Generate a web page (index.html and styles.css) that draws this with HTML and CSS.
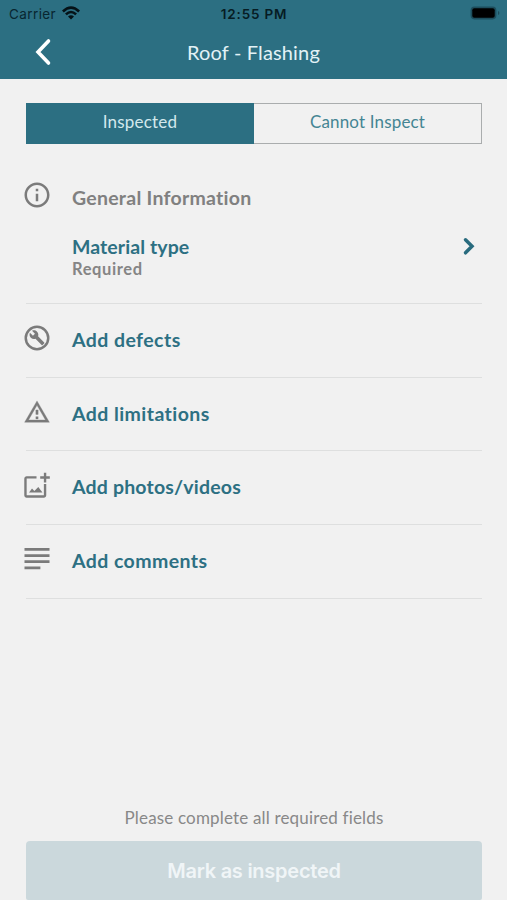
FILE: index.html
```html
<!DOCTYPE html>
<html lang="en">
<head>
<meta charset="utf-8">
<title>Roof - Flashing</title>
<link rel="stylesheet" href="styles.css">
</head>
<body>
<div class="screen">
  <header class="header">
    <div class="status">
      <div class="carrier"><span>Carrier</span>
        <svg class="wifi" viewBox="0 0 18 14"><path d="M0 4.500Q9-4.200 18 4.500L16.200 6.400Q9-.5 1.800 6.400ZM3 7.500Q9 1.800 15 7.500L13.200 9.300Q9 5.400 4.800 9.300ZM6 10.500Q9 8 12 10.500L9 13.500Z"/></svg>
      </div>
      <div class="time">12:55 PM</div>
      <svg class="battery" viewBox="0 0 30 14"><rect x=".6" y=".6" width="25.800" height="12.800" rx="3.800"/><rect class="charge" x="2.300" y="2.300" width="22.400" height="9.400" rx="2"/><path d="M28 5v4q1.400-.4 1.400-2T28 5Z"/></svg>
    </div>
    <div class="nav">
      <svg class="back" viewBox="0 0 18 28"><path d="M14.500 3L4 14l10.500 11"/></svg>
      <h1 class="title">Roof - Flashing</h1>
    </div>
  </header>
  <main class="content">
    <div class="segments">
      <div class="segment active">Inspected</div>
      <div class="segment">Cannot Inspect</div>
    </div>
    <section class="general">
      <svg class="icon" viewBox="0 0 24 24"><path d="M11 7h2v2h-2zm0 4h2v6h-2zm1-9C6.480 2 2 6.480 2 12s4.480 10 10 10 10-4.480 10-10S17.520 2 12 2zm0 18c-4.410 0-8-3.590-8-8s3.590-8 8-8 8 3.590 8 8-3.590 8-8 8z"/></svg>
      <div class="info">
        <h2 class="heading">General Information</h2>
        <div class="field">
          <div><div class="label material">Material type</div><div class="required">Required</div></div>
          <svg class="chevron" viewBox="0 0 12 20"><path d="M2.500 3.800l6.500 6.500-6.500 6.500"/></svg>
        </div>
      </div>
    </section>
    <div class="row">
      <svg class="icon" viewBox="0 0 24 24"><circle class="ring" cx="12" cy="12" r="9"/><g transform="translate(5.500 5.300) scale(.54)"><path d="M22.700 19l-9.100-9.100c.9-2.300.4-5-1.500-6.900-2-2-5-2.400-7.400-1.300L9 6 6 9 1.600 4.700C.4 7.100.9 10.100 2.900 12.100c1.900 1.900 4.600 2.400 6.900 1.500l9.100 9.100c.4.400 1 .4 1.400 0l2.300-2.300c.5-.4.500-1.100.1-1.400z"/></g></svg>
      <span class="label">Add defects</span>
    </div>
    <div class="row">
      <svg class="icon" viewBox="0 0 24 24"><g transform="translate(1.200 1.300) scale(.9)"><path class="outline" d="M12 5.990L19.530 19H4.470L12 5.990M12 2L1 21h22L12 2zm1 14h-2v2h2v-2zm0-6h-2v4h2v-4z"/></g></svg>
      <span class="label">Add limitations</span>
    </div>
    <div class="row">
      <svg class="icon" viewBox="0 0 24 24"><g transform="translate(-1.500 .7) scale(.95)"><path d="M20 20.500H5.500V6.500h8.300V4.600H5.500c-1.100 0-2 .9-2 2v14c0 1.100.9 2 2 2H20c1.100 0 2-.9 2-2v-9.500h-2v9.400zM12 17l-2-2.200L7.500 18.300h11.300l-3.500-4.700zM22 4.600V1.500h-2v3.100h-3.100v2H20v3.100h2V6.600h3v-2z"/></g></svg>
      <span class="label photos">Add photos/videos</span>
    </div>
    <div class="row">
      <svg class="icon" viewBox="0 0 24 24"><path d="M2 3.200h20v2.200H2zM2 8.100h20v2.200H2zM2 13h20v2.200H2zM2 17.900h12.700v2.200H2z"/></svg>
      <span class="label">Add comments</span>
    </div>
  </main>
  <footer class="footer">
    <p class="hint">Please complete all required fields</p>
    <button class="submit" disabled>Mark as inspected</button>
  </footer>
</div>
</body>
</html>
```

FILE: styles.css
```css
* { box-sizing: border-box; }
body { margin: 0; background: #f1f1f1; font-family: Lato, "Noto Sans", sans-serif; font-variant-ligatures: none; color: #7d7d7d; }
svg { display: block; flex: none; }
h1, h2, p { margin: 0; }
.screen { width: 507px; height: 900px; display: flex; flex-direction: column; overflow: hidden; }
.header { height: 79px; background: #2c6f82; flex: none; }
.status { height: 27px; display: grid; grid-template-columns: 1fr auto 1fr; align-items: center; padding: 0 7px 0 9px; font-family: Inter, sans-serif; font-size: 13.500px; color: #082630; }
.carrier { display: flex; align-items: center; gap: 6px; letter-spacing: .4px; }
.wifi { width: 18px; height: 14px; margin-top: -2px; fill: #051217; }
.time { font-weight: 600; letter-spacing: .8px; color: #061c24; margin-right: 1px; }
.battery { width: 30px; height: 14px; justify-self: end; margin-top: -1px; fill: #1d4e5d; }
.charge { fill: #000; }
.nav { height: 52px; display: grid; grid-template-columns: 60px 1fr 60px; align-items: center; }
.back { width: 18px; height: 28px; margin: -2px 0 0 34px; fill: none; stroke: #fff; stroke-width: 3.600; stroke-linecap: round; }
.title { text-align: center; font-size: 20px; line-height: 24px; font-weight: 400; letter-spacing: .15px; color: #e2f2f6; margin-top: -3px; }
.content { padding: 24px 25px 0 26px; flex: 1; }
.segments { height: 41px; display: grid; grid-template-columns: 1fr 1fr; border: 1px solid #aaadae; }
.segment { display: flex; justify-content: center; align-items: center; padding-bottom: 4px; font-size: 17px; letter-spacing: .16px; color: #448593; }
.active { background: #2c6f82; color: #d3e8ed; letter-spacing: .2px; margin: -1px 0 -1px -1px; }
.icon { width: 30px; height: 30px; margin-left: -4px; margin-right: .5px; fill: #7b7b7b; }
.ring { fill: none; stroke: #7b7b7b; stroke-width: 2; }
.outline { stroke: #7b7b7b; stroke-width: .3; }
.general { display: flex; height: 160px; padding-top: 36px; border-bottom: 1px solid #dedfdf; }
.info { flex: 1; margin-left: 19.500px; }
.heading { font-size: 19.500px; line-height: 24px; letter-spacing: .25px; margin-top: 6px; color: #808080; }
.field { display: flex; justify-content: space-between; align-items: flex-start; margin-top: 25px; }
.label { font-size: 19.500px; line-height: 24px; font-weight: 700; letter-spacing: .43px; color: #2d7083; }
.material { letter-spacing: .08px; }
.photos { letter-spacing: .18px; }
.required { font-size: 16.500px; line-height: 21px; font-weight: 700; letter-spacing: .62px; color: #858585; }
.chevron { width: 12px; height: 20px; margin: 1px 7.500px 0 0; fill: none; stroke: #286b7e; stroke-width: 3.500; stroke-linecap: round; }
.row { height: 73.700px; display: flex; padding-top: 19px; border-bottom: 1px solid #dedfdf; }
.row .label { margin: 5px 0 0 19.500px; }
.footer { padding: 0 25px 0 26px; flex: none; }
.hint { text-align: center; font-size: 17px; line-height: 24px; letter-spacing: .17px; color: #888; }
.submit { display: block; width: 100%; height: 59px; margin-top: 11px; padding: 0; border: 0; border-radius: 4px 4px 2px 2px; background: #cbd8dc; color: #f0f5f7; font-family: Inter, sans-serif; font-weight: 600; font-size: 20px; letter-spacing: -.25px; }
```
